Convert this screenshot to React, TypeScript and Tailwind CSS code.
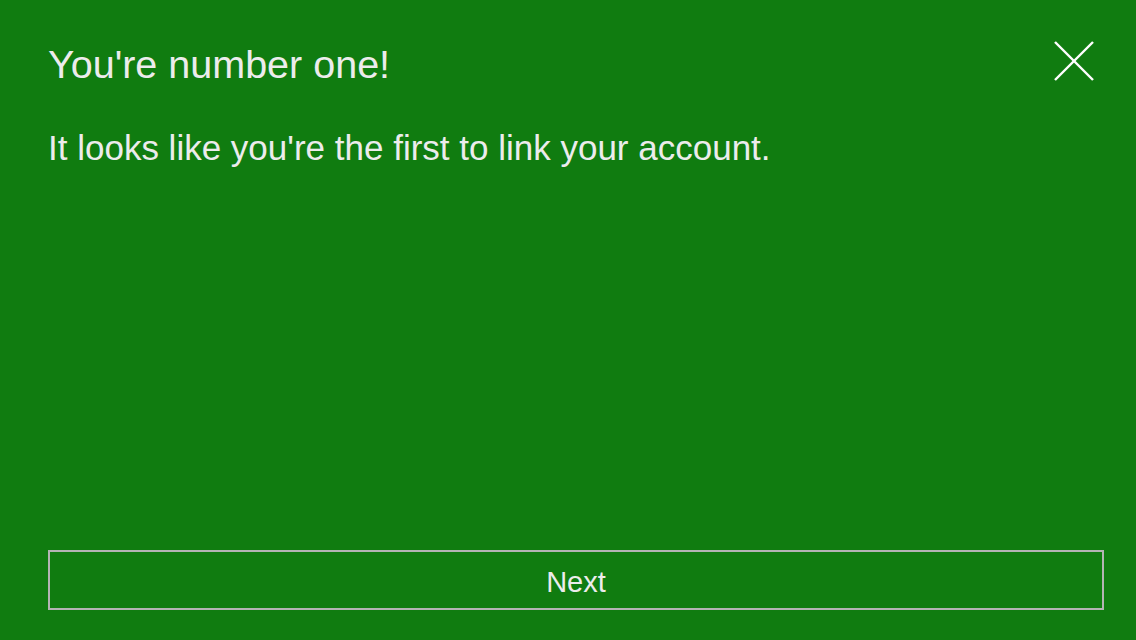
export default function App() {
  return (
    <div
      className="h-[640px] w-full bg-[#107c10] flex flex-col pl-12 pr-8 text-[#ececec]"
      style={{ fontFamily: '"Liberation Sans", Arial, sans-serif' }}
    >
      {/* Header */}
      <div className="flex items-start justify-between pt-10">
        <h1 className="text-[39.5px] leading-[48px] font-normal">You're number one!</h1>
        <button className="mt-[1px] mr-[10px] w-10 h-10" aria-label="Close">
          <svg viewBox="0 0 40 40" className="w-10 h-10" fill="none" stroke="#ffffff" strokeWidth="2.4">
            <line x1="1" y1="1" x2="39" y2="39" />
            <line x1="39" y1="1" x2="1" y2="39" />
          </svg>
        </button>
      </div>

      <p className="mt-[38px] text-[35px] leading-[44px]">
        It looks like you're the first to link your account.
      </p>

      {/* Footer */}
      <button className="mt-auto mb-[30px] h-[60px] w-full border-2 border-[#b4b4b4] pt-[3px] text-[29px] leading-[34px] text-[#ececec]">
        Next
      </button>
    </div>
  );
}
